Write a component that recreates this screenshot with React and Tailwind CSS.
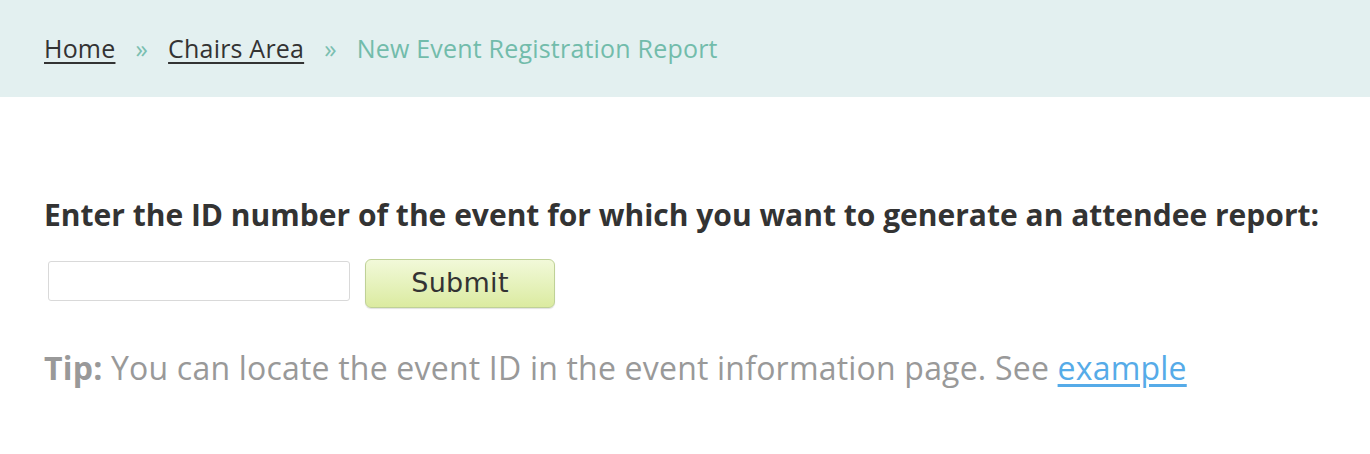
export default function App() {
  return (
    <div className="min-h-[454px] bg-white font-['Open_Sans',sans-serif]">
      {/* Breadcrumb */}
      <div className="h-[97px] bg-[#e3f0f0] flex items-center pl-[44px] text-[25px] tracking-[0.2px]">
        <a href="#" className="text-[#333] underline underline-offset-4">
          Home
        </a>
        <span className="text-[#7bbfb0] mx-[20px]">»</span>
        <a href="#" className="text-[#333] underline underline-offset-4">
          Chairs Area
        </a>
        <span className="text-[#7bbfb0] mx-[20px]">»</span>
        <span className="text-[#72bcab]">New Event Registration Report</span>
      </div>

      <div className="pl-[44px] pt-[100px]">
        <h2 className="text-[30px] font-bold text-[#333] leading-[36px]">
          Enter the ID number of the event for which you want to generate an
          attendee report:
        </h2>
        <div className="flex items-start mt-[26px] ml-[4px]">
          <input
            type="text"
            className="mt-[2px] w-[302px] h-[40px] border border-[#d9d9d9] rounded-[3px] bg-white"
          />
          <button className="ml-[15px] w-[190px] h-[49px] rounded-[6px] border border-[#bfd197] bg-gradient-to-b from-[#f2f9d9] to-[#dbeba0] text-[27px] text-[#333] font-['DejaVu_Sans',sans-serif] tracking-[0.3px] shadow-[0_1px_1px_rgba(0,0,0,0.12)]">
            Submit
          </button>
        </div>
        <p className="mt-[40px] text-[32px] leading-[40px] text-[#999] tracking-[0.2px]">
          <span className="font-bold">Tip:</span> You can locate the event ID in
          the event information page. See{" "}
          <a href="#" className="text-[#56abe8] underline underline-offset-4">
            example
          </a>
        </p>
      </div>
    </div>
  );
}
